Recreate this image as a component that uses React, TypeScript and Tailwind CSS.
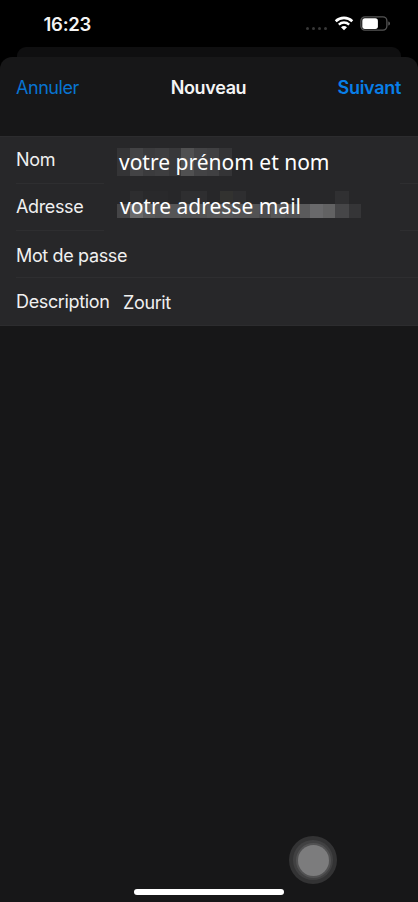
import type { ReactNode } from "react";

type Tile = [width: number, color: string];

const nameTiles: Tile[] = [
  [13, "#343436"], [13, "#434345"], [12, "#3b3b3d"], [14, "#3e3e40"], [12, "#38383a"],
  [13, "#505051"], [13, "#434345"], [12, "#404042"], [13, "#343436"],
];

const mailTopTiles: Tile[] = [
  [13, "#272729"], [13, "#2d2d2f"], [12, "#29292b"], [13, "#29292b"], [13, "#272729"],
  [26, "#2e2e30"], [13, "#272729"], [13, "#323230"], [13, "#2e2e30"], [89, "#272729"],
  [14, "#303032"], [12, "#272729"],
];

const mailBottomTiles: Tile[] = [
  [13, "#454547"], [13, "#6a6a6b"], [12, "#5a5a5b"], [26, "#555556"], [26, "#525253"],
  [26, "#575758"], [13, "#535354"], [13, "#525253"], [12, "#4c4c4e"], [14, "#575758"],
  [15, "#535354"], [10, "#5b5b5c"], [13, "#69696b"], [12, "#626263"], [14, "#464648"],
  [12, "#353537"],
];

function Tiles({ tiles, className }: { tiles: Tile[]; className: string }) {
  return (
    <div className={`flex ${className}`}>
      {tiles.map(([width, color], i) => (
        <span key={i} className="h-full shrink-0" style={{ width, backgroundColor: color }} />
      ))}
    </div>
  );
}

function Label({ children, className }: { children: ReactNode; className: string }) {
  return (
    <span className={`whitespace-nowrap text-[18px] leading-[22px] tracking-[-0.36px] text-[#f0f0f0] ${className}`}>
      {children}
    </span>
  );
}

function SplitDivider() {
  return (
    <div className="flex h-px justify-between pl-4">
      <span className="w-[88px] bg-[#2e2e30]" />
      <span className="w-[18px] bg-[#2e2e30]" />
    </div>
  );
}

function StatusBar() {
  return (
    <header className="flex h-[47px] shrink-0 items-start justify-between pl-[43.5px] pr-[27px] pt-3">
      <span className="text-[18.5px] font-semibold leading-6 tracking-[-0.25px] text-[#f4f4f4]">16:23</span>
      <div className="flex pt-1">
        <div className="mt-[11px] flex gap-[2.8px]">
          {[0, 1, 2, 3].map((n) => (
            <span key={n} className="size-[3.2px] rounded-full bg-[#383838]" />
          ))}
        </div>
        <svg className="ml-[7px] h-[15px] w-[20px]" viewBox="0 0 20 15" fill="none">
          <path d="M1.7 5.2C6.4.7 13.6.7 18.3 5.2" stroke="#fff" strokeWidth="2.6" />
          <path d="M4.8 8.6c3-2.8 7.4-2.8 10.4 0" stroke="#fff" strokeWidth="2.3" />
          <path d="M7 11.2c1.7-1.6 4.3-1.6 6 0l-3 3z" fill="#fff" />
        </svg>
        <svg className="ml-[6px] h-[15px] w-[31px]" viewBox="0 0 31 15" fill="none">
          <rect x=".9" y=".9" width="26" height="13.2" rx="4" stroke="#555" strokeWidth="1.3" />
          <rect x="2.3" y="2.3" width="15.6" height="10.6" rx="2.6" fill="#fff" />
          <path d="M28.4 5.4c2 .7 2 3.5 0 4.2z" fill="#666" />
        </svg>
      </div>
    </header>
  );
}

export default function App() {
  return (
    <div className="relative flex h-[902px] w-[418px] flex-col overflow-hidden bg-black font-['Inter','Liberation_Sans',sans-serif]">
      <StatusBar />
      <div className="mx-[17px] h-[10px] shrink-0 rounded-t-[9px] bg-[#0f0f10]" />
      <main className="relative flex grow flex-col rounded-t-[12px] bg-[#171718]">
        <nav className="flex h-[79px] items-start justify-between pl-4 pr-[17px] pt-[20px] text-[18px] leading-[22px]">
          <span className="w-[110px] tracking-[-0.45px] text-[#0874d1]">Annuler</span>
          <span className="font-semibold tracking-[-0.35px] text-[#f4f4f4]">Nouveau</span>
          <span className="w-[110px] text-right font-semibold tracking-[-0.3px] text-[#087fe8]">Suivant</span>
        </nav>
        <section className="flex h-[190px] flex-col border-y border-[#2c2c2e] bg-[#272729]">
          <div className="flex h-[46px] pl-4">
            <Label className="mt-3 w-[101px]">Nom</Label>
            <div className="relative mt-[11px] h-[28px]">
              <Tiles tiles={nameTiles} className="h-full" />
              <span className="absolute left-[2px] top-[-1px] whitespace-nowrap font-['Noto_Sans',sans-serif] text-[21px] leading-[30px] text-white">
                votre prénom et nom
              </span>
            </div>
          </div>
          <SplitDivider />
          <div className="flex h-[46px] pl-4">
            <Label className="mt-3 w-[101px]">Adresse</Label>
            <div className="relative mt-[7px] h-[27px]">
              <Tiles tiles={mailTopTiles} className="h-[13px]" />
              <Tiles tiles={mailBottomTiles} className="h-[14px]" />
              <span className="absolute left-[3px] top-0 whitespace-nowrap font-['Noto_Sans',sans-serif] text-[21px] leading-[30px] text-white">
                votre adresse mail
              </span>
            </div>
          </div>
          <SplitDivider />
          <div className="flex h-[46px] pl-4">
            <Label className="mt-[14px]">Mot de passe</Label>
          </div>
          <div className="ml-4 h-px shrink-0 bg-[#2e2e30]" />
          <div className="flex grow pl-4">
            <Label className="mt-[13px] w-[107px]">Description</Label>
            <Label className="mt-[14px]">Zourit</Label>
          </div>
        </section>
      </main>
      <div className="absolute left-[289px] top-[836px] flex size-[48px] items-center justify-center rounded-full bg-[#333334]">
        <div className="flex size-[40px] items-center justify-center rounded-full bg-[#414142]">
          <div className="flex size-[35px] items-center justify-center rounded-full bg-[#525253]">
            <div className="size-[31px] rounded-full bg-[#7c7c7d]" />
          </div>
        </div>
      </div>
      <div className="absolute left-[134px] top-[889px] h-[6px] w-[150px] rounded-full bg-white" />
    </div>
  );
}
